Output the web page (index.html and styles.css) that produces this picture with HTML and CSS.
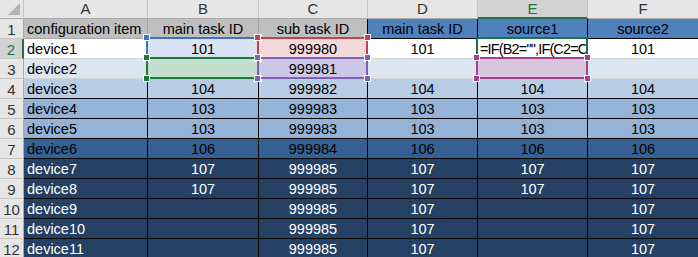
FILE: index.html
```html
<!DOCTYPE html>
<html>
<head>
<meta charset="utf-8">
<link rel="stylesheet" href="styles.css">
</head>
<body>
<div class="sheet">
  <div class="c hd corner"><span class="tri"></span></div>
  <div class="c hd">A</div>
  <div class="c hd">B</div>
  <div class="c hd">C</div>
  <div class="c hd">D</div>
  <div class="c hd act">E</div>
  <div class="c hd">F</div>

  <div class="c rh">1</div>
  <div class="c g1">configuration item</div>
  <div class="c g1 n">main task ID</div>
  <div class="c g1 n dkr">sub task ID</div>
  <div class="c b1 n">main task ID</div>
  <div class="c b1 n">source1</div>
  <div class="c b1 n">source2</div>

  <div class="c rh ract">2</div>
  <div class="c w">device1</div>
  <div class="c bl n">101<span class="box blue"><i class="h tl"></i><i class="h tr"></i><i class="h bl2"></i><i class="h br"></i></span></div>
  <div class="c pk n">999980<span class="box red"><i class="h tl"></i><i class="h tr"></i><i class="h bl2"></i><i class="h br"></i></span></div>
  <div class="c w n">101</div>
  <div class="c w fcell"><span class="clip">=IF(B2="",IF(C2=C</span><span class="active"></span></div>
  <div class="c w n">101</div>

  <div class="c rh">3</div>
  <div class="c l">device2</div>
  <div class="c gr n"><span class="box green"><i class="h tl"></i><i class="h tr"></i><i class="h bl2"></i><i class="h br"></i></span></div>
  <div class="c pu n">999981<span class="box purple"><i class="h tl"></i><i class="h tr"></i><i class="h bl2"></i><i class="h br"></i></span></div>
  <div class="c l n"></div>
  <div class="c mg n"><span class="box magenta"><i class="h tl"></i><i class="h tr"></i><i class="h bl2"></i><i class="h br"></i></span></div>
  <div class="c l n"></div>

  <div class="c rh">4</div>
  <div class="c k r4">device3</div>
  <div class="c k r4 n">104</div>
  <div class="c k r4 n">999982</div>
  <div class="c k r4 n">104</div>
  <div class="c k r4 n">104</div>
  <div class="c k r4 n">104</div>

  <div class="c rh">5</div>
  <div class="c k r5">device4</div>
  <div class="c k r5 n">103</div>
  <div class="c k r5 n">999983</div>
  <div class="c k r5 n">103</div>
  <div class="c k r5 n">103</div>
  <div class="c k r5 n">103</div>

  <div class="c rh">6</div>
  <div class="c k r5">device5</div>
  <div class="c k r5 n">103</div>
  <div class="c k r5 n">999983</div>
  <div class="c k r5 n">103</div>
  <div class="c k r5 n">103</div>
  <div class="c k r5 n">103</div>

  <div class="c rh">7</div>
  <div class="c k r7">device6</div>
  <div class="c k r7 n">106</div>
  <div class="c k r7 n">999984</div>
  <div class="c k r7 n">106</div>
  <div class="c k r7 n">106</div>
  <div class="c k r7 n">106</div>

  <div class="c rh">8</div>
  <div class="c k r8">device7</div>
  <div class="c k r8 n">107</div>
  <div class="c k r8 n">999985</div>
  <div class="c k r8 n">107</div>
  <div class="c k r8 n">107</div>
  <div class="c k r8 n">107</div>

  <div class="c rh">9</div>
  <div class="c k r8">device8</div>
  <div class="c k r8 n">107</div>
  <div class="c k r8 n">999985</div>
  <div class="c k r8 n">107</div>
  <div class="c k r8 n">107</div>
  <div class="c k r8 n">107</div>

  <div class="c rh">10</div>
  <div class="c k r8">device9</div>
  <div class="c k r8 n"></div>
  <div class="c k r8 n">999985</div>
  <div class="c k r8 n">107</div>
  <div class="c k r8 n"></div>
  <div class="c k r8 n">107</div>

  <div class="c rh">11</div>
  <div class="c k r8">device10</div>
  <div class="c k r8 n"></div>
  <div class="c k r8 n">999985</div>
  <div class="c k r8 n">107</div>
  <div class="c k r8 n"></div>
  <div class="c k r8 n">107</div>

  <div class="c rh">12</div>
  <div class="c k r8">device11</div>
  <div class="c k r8 n"></div>
  <div class="c k r8 n">999985</div>
  <div class="c k r8 n">107</div>
  <div class="c k r8 n"></div>
  <div class="c k r8 n">107</div>
</div>
</body>
</html>
```

FILE: styles.css
```css
html, body {
  margin: 0;
  padding: 0;
  background: #ffffff;
}

body {
  font-family: "Liberation Sans", Arial, sans-serif;
  font-size: 14.5px;
  color: #000;
  overflow: hidden;
}

.sheet {
  display: grid;
  grid-template-columns: 24px 124px 111px 109px 110px 110px 111px;
  grid-template-rows: 19px repeat(12, 20px);
}

.c {
  box-sizing: border-box;
  position: relative;
  border-right: 1px solid #d4d4d4;
  border-bottom: 1px solid #d4d4d4;
  padding: 1px 3px 0 3px;
  line-height: 19px;
  white-space: nowrap;
}

.n { text-align: center; }

.hd {
  background: #e6e6e6;
  border-right-color: #c6c6c6;
  border-bottom-color: #ababab;
  color: #333;
  text-align: center;
  padding-top: 0;
  line-height: 18px;
  font-size: 15px;
}

.hd.act {
  background: #d2d2d2;
  color: #217346;
  border-bottom: 2px solid #217346;
}

.corner { padding: 0; }

.tri {
  position: absolute;
  right: 3px;
  bottom: 3px;
  width: 0;
  height: 0;
  border-left: 12px solid transparent;
  border-bottom: 12px solid #b4b4b4;
}

.rh {
  background: #e6e6e6;
  border-right-color: #ababab;
  border-bottom-color: #c6c6c6;
  color: #333;
  text-align: center;
  padding: 1px 0 0 0;
  font-size: 15px;
}

.rh.ract {
  background: #d2d2d2;
  color: #217346;
  border-right: 2px solid #217346;
}

.g1 { background: #bfbfbf; border-right-color: #a6a6a6; border-bottom-color: #a6a6a6; }
.g1.dkr { border-right-color: #000; }
.b1 { background: #4f81bd; border-right-color: #000; border-bottom-color: #000; }
.w { background: #ffffff; }
.l { background: #dce6f1; }
.bl { background: #dae3f3; }
.pk { background: #f2d9db; }
.gr { background: #c3dfd0; }
.pu { background: #ccc7e4; }
.mg { background: #d9c5dd; }

.k { border-right-color: #000; border-bottom-color: #000; }
.r4 { background: #b8cce4; }
.r5 { background: #95b3d7; }
.r7 { background: #366092; }
.r8 { background: #244062; color: #ffffff; }

.fcell { padding-left: 2px; padding-right: 1px; }

.clip {
  display: block;
  overflow: hidden;
  position: relative;
  z-index: 1;
  letter-spacing: -0.85px;
}

.active {
  position: absolute;
  left: -2px;
  top: -2px;
  right: -1px;
  bottom: -1px;
  border: 2px solid #217346;
  z-index: 3;
}

.box {
  position: absolute;
  left: -2px;
  top: -2px;
  right: -1px;
  bottom: -1px;
  border: 2px solid;
  z-index: 2;
}

.blue { border-color: #3f72c4; }
.red { border-color: #c8404a; }
.green { border-color: #1d7a35; }
.purple { border-color: #7f5fb8; }
.magenta { border-color: #a5408f; z-index: 4; }

.h {
  position: absolute;
  width: 7px;
  height: 7px;
  box-sizing: border-box;
  border: 1px solid #ffffff;
}

.blue .h { background: #3f72c4; }
.red .h { background: #c8404a; }
.green .h { background: #1d7a35; }
.purple .h { background: #7f5fb8; }
.magenta .h { background: #a5408f; }

.tl { left: -5px; top: -5px; }
.tr { right: -5px; top: -5px; }
.bl2 { left: -5px; bottom: -5px; }
.br { right: -5px; bottom: -5px; }
```
